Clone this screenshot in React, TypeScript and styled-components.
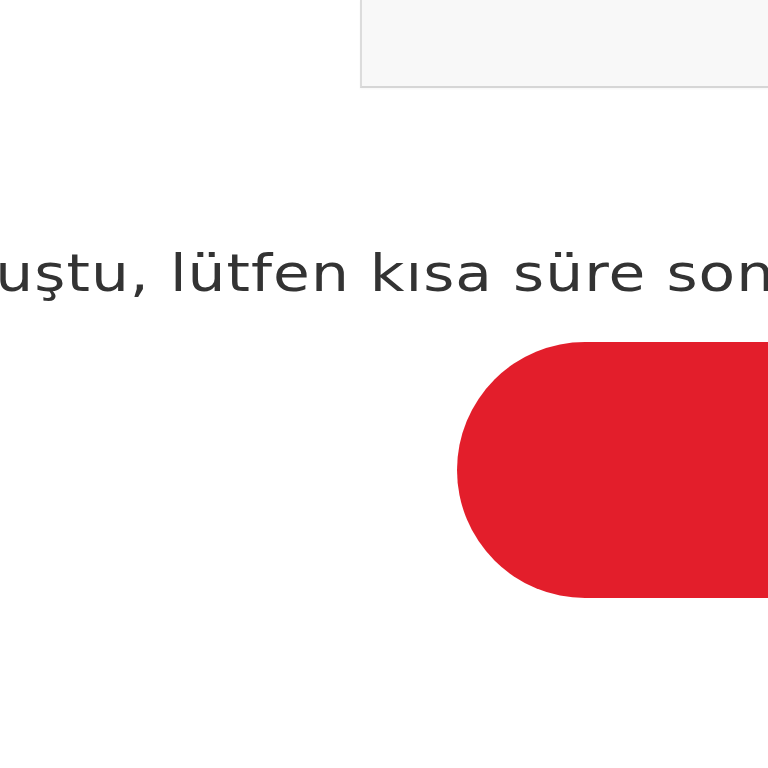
import React from "react";
import styled, { createGlobalStyle } from "styled-components";

const Global = createGlobalStyle`
  html, body {
    margin: 0;
    padding: 0;
    background: #ffffff;
    overflow: hidden;
  }
  #root {
    width: 768px;
    height: 768px;
    overflow: hidden;
  }
`;

const Page = styled.div`
  width: 768px;
  height: 768px;
  overflow: hidden;
  display: flex;
  flex-direction: column;
  align-items: flex-start;
  background: #ffffff;
  font-family: "DejaVu Sans", "Noto Sans", sans-serif;
`;

const SearchBox = styled.div`
  flex: 0 0 auto;
  box-sizing: border-box;
  margin-left: 360px;
  width: 560px;
  height: 88px;
  background: #f8f8f8;
  border-left: 2px solid #dcdcdc;
  border-bottom: 2px solid #d6d6d6;
  box-shadow: 0 1px 2px rgba(0, 0, 0, 0.04);
`;

const Message = styled.p`
  flex: 0 0 auto;
  margin: 159px 0 0 -60px;
  font-size: 52px;
  line-height: 52px;
  letter-spacing: 0.9px;
  color: #333333;
  white-space: nowrap;
  transform: scaleX(1.15);
  transform-origin: left center;
`;

const RetryButton = styled.button`
  flex: 0 0 auto;
  margin: 43px 0 0 457px;
  width: 620px;
  height: 256px;
  border: none;
  border-radius: 128px;
  background: #e31e2b;
  color: #ffffff;
  cursor: pointer;
`;

export default function App() {
  return (
    <>
      <Global />
      <Page>
        <SearchBox />
        <Message>oluştu, lütfen kısa süre sonra tekrar deneyin.</Message>
        <RetryButton aria-label="Tekrar dene" />
      </Page>
    </>
  );
}
